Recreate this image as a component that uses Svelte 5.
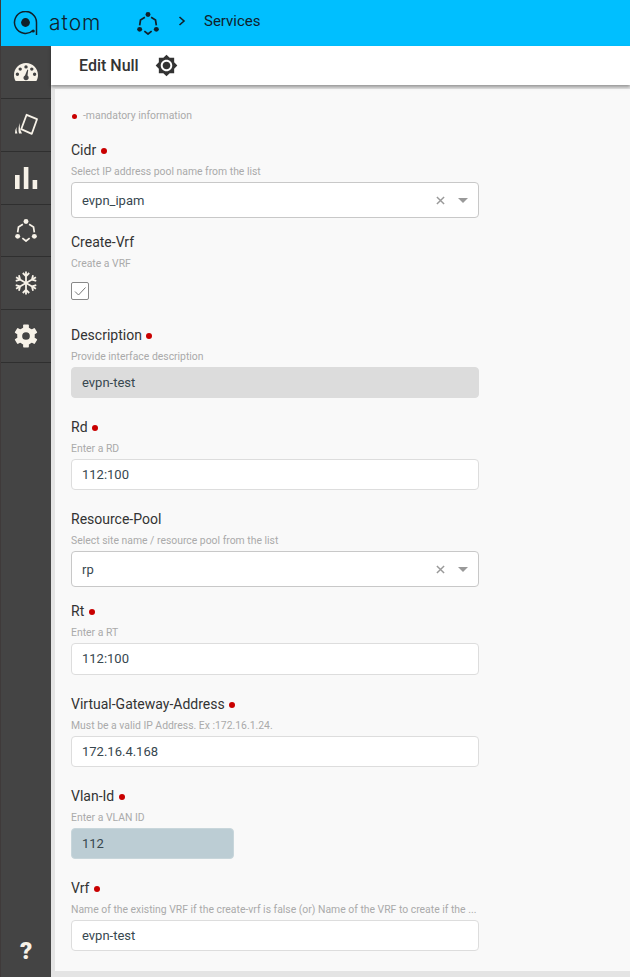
<script lang="ts">
	type Field = {
		label: string;
		help: string;
		kind: 'select' | 'input' | 'check';
		value?: string;
		required?: boolean;
		variant?: 'disabled' | 'short';
	};

	const fields: Field[] = [
		{ label: 'Cidr', help: 'Select IP address pool name from the list', kind: 'select', value: 'evpn_ipam', required: true },
		{ label: 'Create-Vrf', help: 'Create a VRF', kind: 'check' },
		{ label: 'Description', help: 'Provide interface description', kind: 'input', value: 'evpn-test', required: true, variant: 'disabled' },
		{ label: 'Rd', help: 'Enter a RD', kind: 'input', value: '112:100', required: true },
		{ label: 'Resource-Pool', help: 'Select site name / resource pool from the list', kind: 'select', value: 'rp' },
		{ label: 'Rt', help: 'Enter a RT', kind: 'input', value: '112:100', required: true },
		{ label: 'Virtual-Gateway-Address', help: 'Must be a valid IP Address. Ex :172.16.1.24.', kind: 'input', value: '172.16.4.168', required: true },
		{ label: 'Vlan-Id', help: 'Enter a VLAN ID', kind: 'input', value: '112', required: true, variant: 'short' },
		{
			label: 'Vrf',
			help: 'Name of the existing VRF if the create-vrf is false (or) Name of the VRF to create if the ...',
			kind: 'input',
			value: 'evpn-test',
			required: true
		}
	];

	// every 60 degrees, for the cog teeth and the snowflake arms
	const spokes = [0, 60, 120, 180, 240, 300];

	const brightness =
		'M20 8.69V4h-4.69L12 .69 8.69 4H4v4.69L.69 12 4 15.31V20h4.69L12 23.31 15.31 20H20v-4.69L23.31 12 20 8.69zM12 18c-3.31 0-6-2.69-6-6s2.69-6 6-6 6 2.69 6 6-2.69 6-6 6zm0-10c-2.21 0-4 1.79-4 4s1.79 4 4 4 4-1.79 4-4-1.79-4-4-4z';
</script>

{#snippet atomMark()}
	<circle cx="12" cy="2.7" r="2.7" fill="currentColor" />
	<circle cx="2.9" cy="18.9" r="2.7" fill="currentColor" />
	<circle cx="21.1" cy="18.9" r="2.7" fill="currentColor" />
	<path
		d="M8.6 5.8 L3.8 8.8 L2.9 14.5 M15.4 5.8 L20.2 8.8 L21.1 14.5 M8 20.8 L12 24 L16 20.8"
		fill="none"
		stroke="currentColor"
		stroke-width="1.9"
	/>
{/snippet}

<div class="page">
	<header class="topbar">
		<svg class="logo" viewBox="0 0 26 24" width="26" height="24" aria-hidden="true">
			<path d="M23.5 24 V11.5 A11 11 0 1 0 20 19.5" fill="none" stroke="#10212b" stroke-width="1.5" />
			<circle cx="12.5" cy="11.5" r="4.4" fill="#10212b" />
			<circle cx="20.2" cy="20" r="1.6" fill="#10212b" />
		</svg>
		<span class="wordmark">atom</span>
		<svg class="crumb-icon" viewBox="0 0 24 25" width="22" height="23" aria-hidden="true">
			{@render atomMark()}
		</svg>
		<svg class="chevron" viewBox="0 0 8 10" width="8" height="10" aria-hidden="true">
			<path d="M1.5 1 L6 5 L1.5 9" fill="none" stroke="#10212b" stroke-width="1.6" />
		</svg>
		<span class="crumb">Services</span>
	</header>

	<div class="body">
		<nav class="sidebar" aria-label="Main">
			<a href="#dash" class="nav-item" aria-label="Dashboard">
				<svg viewBox="0 0 24 20" width="24" height="20" aria-hidden="true">
					<path
						fill-rule="evenodd"
						d="M12 1 C5.4 1 0 6.3 0 13 C0 15.4 .6 17.4 1.6 19 H22.4 C23.4 17.4 24 15.4 24 13 C24 6.3 18.6 1 12 1Z M12 3.2a1.7 1.7 0 1 1 0 3.4a1.7 1.7 0 1 1 0-3.4Z M6.2 5.4a1.7 1.7 0 1 1 0 3.4a1.7 1.7 0 1 1 0-3.4Z M17.8 5.4a1.7 1.7 0 1 1 0 3.4a1.7 1.7 0 1 1 0-3.4Z M3.4 10.6a1.7 1.7 0 1 1 0 3.4a1.7 1.7 0 1 1 0-3.4Z M20.6 10.6a1.7 1.7 0 1 1 0 3.4a1.7 1.7 0 1 1 0-3.4Z M13.4 7.6 L14.2 7.9 L13.5 13.6 A2.6 2.6 0 1 1 11 13.4Z"
						fill="#f7f2e8"
					/>
				</svg>
			</a>
			<a href="#cards" class="nav-item" aria-label="Templates">
				<svg viewBox="0 0 26 24" width="26" height="24" aria-hidden="true">
					<path d="M13.6 1.8 L24 6.2 L18.8 20.8 L8.2 16.2Z" fill="none" stroke="#f7f2e8" stroke-width="1.8" stroke-linejoin="round" />
					<path d="M7 10 Q6 15 9 20.5 H6 Q4.6 15 7 10Z M3.6 14 Q3 17 4.4 20.5 H2 Q1.8 17 3.6 14Z" fill="#f7f2e8" />
				</svg>
			</a>
			<a href="#bars" class="nav-item" aria-label="Reports">
				<svg viewBox="0 0 24 24" width="24" height="24" aria-hidden="true">
					<path d="M1 9 H5.6 V23 H1Z M9.8 1 H14.4 V23 H9.8Z M18.6 14 H23.2 V23 H18.6Z" fill="#f7f2e8" />
				</svg>
			</a>
			<a href="#services" class="nav-item atom-nav" aria-label="Services">
				<svg viewBox="0 0 24 25" width="22" height="23" aria-hidden="true">
					{@render atomMark()}
				</svg>
			</a>
			<a href="#cold" class="nav-item" aria-label="Freeze">
				<svg viewBox="-12 -12 24 24" width="24" height="24" aria-hidden="true">
					<g fill="none" stroke="#f7f2e8" stroke-width="1.8">
						{#each spokes as angle}
							<path d="M0 0 V-11.5 M-3.2 -10 L0 -6.8 L3.2 -10" transform="rotate({angle})" />
						{/each}
					</g>
				</svg>
			</a>
			<a href="#settings" class="nav-item" aria-label="Settings">
				<svg viewBox="-12.5 -12.5 25 25" width="24" height="24" aria-hidden="true">
					<circle r="6.6" fill="none" stroke="#f7f2e8" stroke-width="5.2" />
					{#each spokes as angle}
						<rect x="-3" y="-12" width="6" height="5" rx="0.8" fill="#f7f2e8" transform="rotate({angle})" />
					{/each}
				</svg>
			</a>
			<a href="#help" class="help">?</a>
		</nav>

		<div class="main">
			<div class="subheader">
				<h1>Edit Null</h1>
				<svg viewBox="0 0 24 24" width="23" height="23" aria-hidden="true">
					<path d={brightness} fill="#333" />
				</svg>
			</div>

			<form class="panel">
				<p class="legend"><span class="dot small"></span>-mandatory information</p>

				{#each fields as field (field.label)}
					<div class="field kind-{field.kind}">
						<div class="label">
							{field.label}
							{#if field.required}<span class="dot"></span>{/if}
						</div>
						<div class="help-text">{field.help}</div>

						{#if field.kind === 'select'}
							<div class="select">
								<span>{field.value}</span>
								<svg class="clear" viewBox="0 0 10 10" width="9" height="9" aria-hidden="true">
									<path d="M1 1 L9 9 M9 1 L1 9" stroke="#999" stroke-width="1.6" />
								</svg>
								<span class="caret"></span>
							</div>
						{:else if field.kind === 'check'}
							<div class="checkbox">
								<svg viewBox="0 0 16 16" width="16" height="16" aria-hidden="true">
									<path d="M3 8.5 L6.5 12 L13.5 4.5" fill="none" stroke="#777" stroke-width="1" />
								</svg>
							</div>
						{:else}
							<div class="input {field.variant ?? ''}">{field.value}</div>
						{/if}
					</div>
				{/each}
			</form>
		</div>
	</div>
</div>

<style>
	:global(body) {
		font-family: Roboto, 'Liberation Sans', sans-serif;
	}

	.page {
		display: flex;
		flex-direction: column;
		height: 977px;
		overflow: hidden;
		background: #e4e4e4;
	}

	.topbar {
		display: flex;
		align-items: center;
		flex: 0 0 46px;
		padding-left: 12px;
		background: #00bfff;
		border-left: 1px solid #3f3a3a;
		color: #10212b;
	}

	.wordmark {
		width: 55px;
		margin: 0 0 2px 10px;
		font-family: Inter, Roboto, sans-serif;
		font-weight: 300;
		font-size: 21px;
		letter-spacing: 1px;
		line-height: 1;
	}

	.crumb-icon {
		margin-left: 33px;
	}

	.chevron {
		margin: 0 0 4px 19px;
	}

	.crumb {
		margin: 0 0 4px 18px;
		font-size: 15px;
	}

	.body {
		display: flex;
		flex: 1;
		min-height: 0;
	}

	.sidebar {
		display: flex;
		flex-direction: column;
		flex: 0 0 51px;
		box-sizing: border-box;
		background: #444;
		border-left: 1px solid #3f3a3a;
	}

	.nav-item {
		display: flex;
		align-items: center;
		justify-content: center;
		box-sizing: border-box;
		height: 53px;
		margin-bottom: -0.2px;
		border-bottom: 1px solid #2f2f2f;
	}

	.atom-nav {
		color: #f7f2e8;
	}

	.help {
		margin-top: auto;
		padding-bottom: 12px;
		color: #f7f2e8;
		font-weight: 900;
		font-size: 24px;
		line-height: 28px;
		text-align: center;
		text-decoration: none;
	}

	.main {
		display: flex;
		flex-direction: column;
		flex: 1;
		min-width: 0;
	}

	.subheader {
		display: flex;
		align-items: center;
		gap: 16px;
		flex: 0 0 39px;
		padding-left: 28px;
		background: #fff;
		box-shadow: 0 2px 3px rgba(0, 0, 0, 0.35);
		position: relative;
	}

	h1 {
		margin: 0;
		color: #333;
		font-weight: 500;
		font-size: 16px;
	}

	.panel {
		flex: 1;
		margin: 4px 0 6px 4px;
		padding: 21px 0 0 16px;
		background: #f9f9f9;
	}

	.legend {
		display: flex;
		align-items: center;
		margin: 0 0 19px;
		height: 12px;
		color: #aaa;
		font-size: 10.4px;
		line-height: 12px;
	}

	.dot {
		display: inline-block;
		width: 6px;
		height: 6px;
		margin-left: 1px;
		border-radius: 50%;
		background: #c90000;
		vertical-align: 1px;
	}

	.dot.small {
		width: 5px;
		height: 5px;
		margin: 0 6px 0 1px;
	}

	.field {
		width: 408px;
		margin-bottom: 20px;
	}

	.kind-select {
		margin-bottom: 15px;
	}

	.kind-check {
		margin-bottom: 26px;
	}

	.label {
		height: 18px;
		color: #333;
		font-size: 14px;
		line-height: 18px;
	}

	.help-text {
		height: 12px;
		margin: 7px 0 4px;
		overflow: hidden;
		color: #aaa;
		font-size: 10.4px;
		line-height: 12px;
		white-space: nowrap;
	}

	.select,
	.input {
		display: flex;
		align-items: center;
		box-sizing: border-box;
		padding-left: 10px;
		background: #fff;
		border: 1px solid #ddd;
		border-radius: 4px;
		color: #37474f;
		font-size: 13px;
	}

	.select {
		height: 36px;
		border-color: #c8c8c8;
	}

	.select span:first-child {
		flex: 1;
	}

	.clear {
		margin-right: 13px;
	}

	.caret {
		width: 0;
		height: 0;
		margin-right: 10px;
		border-left: 5px solid transparent;
		border-right: 5px solid transparent;
		border-top: 5px solid #999;
	}

	.input {
		height: 31.2px;
	}

	.input.disabled {
		background: #dcdcdc;
		border-color: #dcdcdc;
	}

	.input.short {
		width: 163px;
		background: #bccdd4;
		border-color: #c8d6db;
	}

	.checkbox {
		display: flex;
		align-items: center;
		justify-content: center;
		box-sizing: border-box;
		width: 18px;
		height: 18px;
		margin-top: 12px;
		background: #fff;
		border: 1px solid #888;
		border-radius: 2px;
	}
</style>
